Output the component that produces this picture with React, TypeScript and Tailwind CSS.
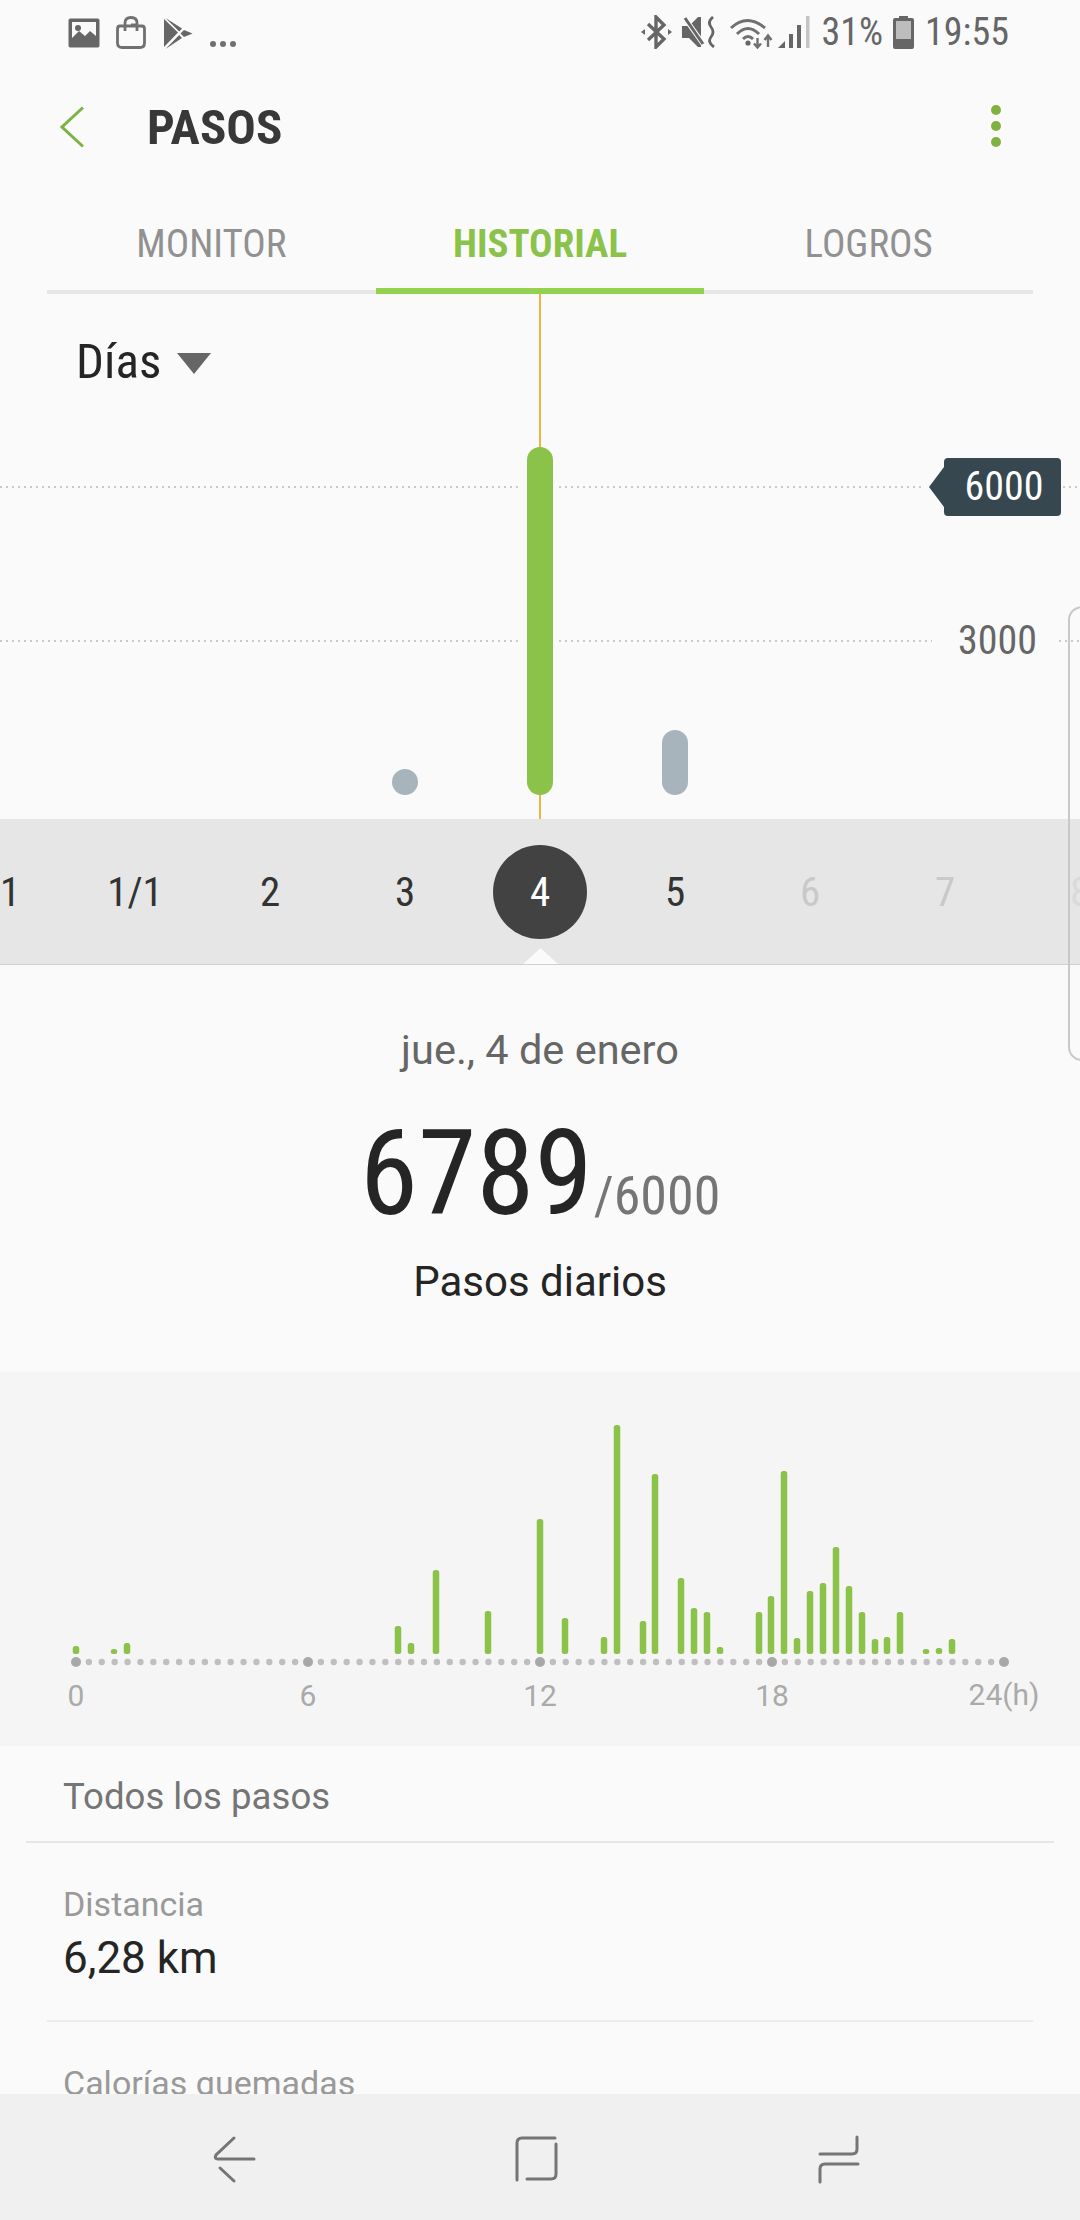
const BARS: [number, number][] = [
  [76, 8], [114, 5], [127, 11], [398, 28], [411, 11], [436, 84], [488, 43], [540, 135],
  [565, 36], [604, 17], [617, 229], [643, 33], [655, 180], [681, 76], [694, 46], [707, 42],
  [720, 7], [759, 42], [771, 58], [784, 183], [797, 16], [810, 63], [823, 71], [836, 107],
  [849, 68], [862, 42], [875, 15], [887, 17], [900, 42], [926, 5], [939, 6], [952, 15],
];
const DOTS = Array.from({ length: 73 }, (_, i) => i);
const DAYS = ["31", "1/1", "2", "3", "4", "5", "6", "7", "8"];
const FONT = "font-['Roboto',sans-serif]";

function StatusLeft() {
  return (
    <div className="flex items-end">
      <svg width="32" height="30" viewBox="0 0 32 30" className="mb-[1px]">
        <rect x="0.5" y="0.5" width="31" height="29" rx="2" fill="#666" />
        <path d="M4 4H28V18L22 13L17 18L11 13L4 20Z" fill="#fafafa" />
        <circle cx="10" cy="10" r="3" fill="#666" />
      </svg>
      <svg width="30" height="33" viewBox="0 0 30 33" className="ml-[16px]" fill="none" stroke="#707070" strokeWidth="2.8">
        <path d="M4 10H26Q28.5 10 28.5 13V27Q28.5 31.5 24 31.5H6Q1.5 31.5 1.5 27V13Q1.5 10 4 10Z" />
        <path d="M9 15V7Q9 1.5 15 1.5Q21 1.5 21 7V15M15 9H21" />
      </svg>
      <svg width="29" height="31" viewBox="0 0 29 31" className="ml-[18px]" fill="#666">
        <path d="M0 1L14 14.5L0 29Z" />
        <path d="M1.5 0L18 10.5L15.2 13.5Z" />
        <path d="M1.5 31L18 20L15.2 17Z" />
        <path d="M20 12L28.5 15.5L20 19L16.5 15.5Z" />
      </svg>
      <svg width="28" height="8" viewBox="0 0 28 8" className="ml-[16px] mb-[1px]" fill="#707070">
        <circle cx="4" cy="4" r="3" />
        <circle cx="14" cy="4" r="3" />
        <circle cx="24" cy="4" r="3" />
      </svg>
    </div>
  );
}

function StatusRight() {
  return (
    <div className={`flex items-center text-[38px] leading-[46px] text-[#666] ${FONT} [font-stretch:75%]`}>
      <svg width="31" height="34" viewBox="0 0 31 34" fill="none" stroke="#666" strokeWidth="3.4">
        <path d="M7 9L23 24L15 32V2L23 10L7 25" />
        <path d="M0 17L4 14V20Z" fill="#666" stroke="none" />
        <path d="M31 17L27 14V20Z" fill="#666" stroke="none" />
      </svg>
      <svg width="35" height="32" viewBox="0 0 35 32" className="ml-[10px]">
        <path d="M0 10H7L16 1H19V31H16L7 22H0Z" fill="#666" />
        <path d="M2 1L22 29" stroke="#fafafa" strokeWidth="5" />
        <path d="M3 2L21 28" stroke="#666" strokeWidth="3" />
        <path d="M31 1Q25 6 29 11Q33 16 29 21Q25 26 32 31" fill="none" stroke="#666" strokeWidth="2.8" />
      </svg>
      <svg width="43" height="33" viewBox="0 0 43 33" className="ml-[13px]" fill="none" stroke="#707070" strokeWidth="3">
        <path d="M1 12Q17 -3 35 12" />
        <path d="M7 18Q18 7 29 18" />
        <path d="M13 23Q18 18 23 23" />
        <circle cx="18" cy="27" r="2.6" fill="#666" stroke="none" />
        <path d="M27.5 22V31M24 27.5L27.5 31.5L31 27.5M38 31V20M34.5 24L38 19.5L41.5 24" strokeWidth="2.4" />
      </svg>
      <svg width="32" height="32" viewBox="0 0 32 32" className="ml-[5px]">
        <path d="M0 32L7 25V32Z" fill="#666" />
        <rect x="11" y="18" width="4" height="14" fill="#666" />
        <rect x="19" y="9" width="4" height="23" fill="#666" />
        <rect x="28" y="0" width="3.5" height="32" fill="#c4c4c4" />
      </svg>
      <span className="ml-[12px]">31%</span>
      <svg width="21" height="33" viewBox="0 0 21 33" className="ml-[10px]">
        <path d="M6 0H15V2H19Q21 2 21 4V31Q21 33 19 33H2Q0 33 0 31V4Q0 2 2 2H6Z" fill="#666" />
        <rect x="3" y="5" width="15" height="18" fill="#bdbdbd" />
      </svg>
      <span className="ml-[11px]">19:55</span>
    </div>
  );
}

function Chart() {
  return (
    <div className="relative h-[525px]">
      <svg width="1080" height="525" className="absolute inset-0">
        <line x1="540" y1="0" x2="540" y2="525" stroke="#ebb545" strokeWidth="2" />
        <g stroke="#c9c9c9" strokeWidth="2" strokeDasharray="2 4">
          <line x1="0" y1="193" x2="522" y2="193" />
          <line x1="559" y1="193" x2="925" y2="193" />
          <line x1="1063" y1="193" x2="1080" y2="193" />
          <line x1="0" y1="347" x2="522" y2="347" />
          <line x1="559" y1="347" x2="932" y2="347" />
          <line x1="1059" y1="347" x2="1080" y2="347" />
        </g>
        <rect x="527" y="153" width="26" height="348" rx="13" fill="#8bc34a" />
        <rect x="392" y="475" width="26" height="26" rx="13" fill="#a7b4bb" />
        <rect x="662" y="436" width="26" height="65" rx="13" fill="#a7b4bb" />
      </svg>
      <div className="relative flex h-[136px] items-center pl-[76px]">
        <span className={`text-[49px] leading-[56px] text-[#252525] ${FONT} [font-stretch:75%]`}>Días</span>
        <svg width="34" height="21" viewBox="0 0 34 21" className="ml-[16px] mt-[3px]">
          <path d="M0 0H34L17 21Z" fill="#666" />
        </svg>
      </div>
      <div className={`absolute left-[929px] top-[164px] flex items-center ${FONT}`}>
        <svg width="15" height="40" viewBox="0 0 15 40">
          <path d="M15 0V40L0 20Z" fill="#37474f" />
        </svg>
        <div className="flex h-[58px] w-[117px] items-center justify-center rounded-[4px] bg-[#37474f] pl-[3px] text-[40px] leading-[46px] text-white [font-stretch:75%]">
          6000
        </div>
      </div>
      <div className={`absolute left-[958px] top-[324px] text-[40px] leading-[46px] text-[#666] ${FONT} [font-stretch:75%]`}>3000</div>
    </div>
  );
}

function DateStrip() {
  return (
    <div className={`relative flex h-[146px] items-center justify-center overflow-hidden border-b border-[#cfcfcf] bg-[#e6e6e6] ${FONT} [font-stretch:75%]`}>
      {DAYS.map((d) => {
        const selected = d === "4";
        const faded = d === "6" || d === "7";
        return (
          <div key={d} className="flex w-[135px] shrink-0 justify-center">
            {selected ? (
              <div className="flex h-[94px] w-[94px] items-center justify-center rounded-full bg-[#424242] text-[41px] leading-[48px] text-white">{d}</div>
            ) : (
              <div className={`flex h-[94px] items-center text-[41px] leading-[48px] ${d === "8" ? "text-[#dadada]" : faded ? "text-[#c9c9c9]" : "text-[#333]"}`}>{d}</div>
            )}
          </div>
        );
      })}
      <svg width="37" height="17" viewBox="0 0 37 17" className="absolute bottom-[-1px] left-[522px]">
        <path d="M0 17L18.5 0L37 17Z" fill="#fafafa" />
      </svg>
    </div>
  );
}

function Summary() {
  return (
    <div className={`flex h-[407px] flex-col items-center ${FONT}`}>
      <div className="mt-[62px] text-[41.5px] leading-[46px] text-[#666]">jue., 4 de enero</div>
      <div className="mt-[42px] flex items-baseline">
        <span className="text-[118px] leading-[119px] text-[#252525] [font-stretch:75%]">6789</span>
        <span className="ml-[1px] text-[54px] leading-[60px] text-[#757575] [font-stretch:75%]">/6000</span>
      </div>
      <div className="mt-[24px] text-[42px] leading-[48px] text-[#252525]">Pasos diarios</div>
    </div>
  );
}

function Hourly() {
  return (
    <div className={`h-[374px] overflow-hidden bg-[#f5f5f5] ${FONT}`}>
      <svg width="1080" height="304" className="block">
        {BARS.map(([x, h]) => (
          <rect key={x} x={x - 3.25} y={282 - h} width="6.5" height={h} rx="2.5" fill="#8bc34a" />
        ))}
        {DOTS.map((i) => {
          const big = i % 18 === 0;
          return (
            <circle
              key={i}
              cx={76 + i * (928 / 72)}
              cy={290}
              r={big ? 5 : 3.2}
              fill={big ? "#a8a8a8" : "#bfbfbf"}
            />
          );
        })}
      </svg>
      <div className="-ml-[40px] flex h-[40px] w-[1160px] items-center text-[30px] leading-[36px] text-[#aaa]">
        {["0", "6", "12", "18", "24(h)"].map((l) => (
          <div key={l} className={`w-[232px] shrink-0 text-center ${l === "24(h)" ? "-mt-[2px]" : ""}`}>{l}</div>
        ))}
      </div>
    </div>
  );
}

function Details() {
  return (
    <div className={`min-h-0 flex-1 overflow-hidden ${FONT}`}>
      <div className="mx-[26px] h-[97px] border-b-2 border-[#e6e6e6] pl-[37px] pt-[29px] text-[36.6px] leading-[44px] text-[#757575]">
        Todos los pasos
      </div>
      <div className="mx-[47px] h-[179px] border-b-2 border-[#ececec] pl-[16px] pt-[41px]">
        <div className="text-[34px] leading-[40px] text-[#999]">Distancia</div>
        <div className="mt-[8px] text-[44px] leading-[52px] text-[#252525]">6,28 km</div>
      </div>
      <div className="pl-[63px] pt-[41px] text-[34px] leading-[40px] text-[#999]">Calorías quemadas</div>
    </div>
  );
}

function BottomNav() {
  return (
    <div className="relative flex h-[126px] shrink-0 items-center bg-[#f0f0f0]">
      <svg width="1080" height="126" viewBox="0 2094 1080 126" fill="none" stroke="#757575" strokeWidth="3" strokeLinecap="round">
        <path d="M234 2138L216 2155Q214 2159 218 2159H254" />
        <path d="M220 2168L234 2181" />
        <path d="M555 2138H522Q517 2138 517 2143V2180" />
        <path d="M556 2144V2174Q556 2179 551 2179H527" />
        <path d="M857 2137V2149Q857 2154 852 2154H820" />
        <path d="M858 2164H825Q820 2164 820 2169V2182" />
      </svg>
    </div>
  );
}

export default function App() {
  return (
    <div className="relative flex h-[2220px] w-[1080px] flex-col overflow-hidden bg-[#fafafa]">
      <div className="flex h-[64px] shrink-0 items-center justify-between pl-[68px] pr-[71px]">
        <StatusLeft />
        <StatusRight />
      </div>
      <div className={`relative flex h-[128px] shrink-0 items-center pl-[60px] ${FONT}`}>
        <svg width="24" height="42" viewBox="0 0 24 42" className="mb-[2px]" fill="none" stroke="#7cb342" strokeWidth="3">
          <path d="M23 1.5L2 21L23 40.5" />
        </svg>
        <span className="ml-[63px] text-[49px] font-bold leading-[58px] text-[#383838] [font-stretch:75%]">PASOS</span>
        <div className="ml-auto mb-[4px] mr-[79px] flex flex-col gap-[6px]">
          <div className="h-[10px] w-[10px] rounded-full bg-[#7fb241]" />
          <div className="h-[10px] w-[10px] rounded-full bg-[#7fb241]" />
          <div className="h-[10px] w-[10px] rounded-full bg-[#7fb241]" />
        </div>
      </div>
      <div className={`mx-[47px] flex h-[102px] shrink-0 ${FONT} text-[39px] leading-[46px] [font-stretch:75%]`}>
        <div className="flex flex-1 items-center justify-center border-b-4 border-[#e6e6e6] pt-[6px] text-[#919191]">MONITOR</div>
        <div className="flex flex-1 items-center justify-center border-b-[6px] border-[#93d14f] pt-[8px] font-bold text-[#8bc34a]">HISTORIAL</div>
        <div className="flex flex-1 items-center justify-center border-b-4 border-[#e6e6e6] pt-[6px] text-[#919191]">LOGROS</div>
      </div>
      <Chart />
      <DateStrip />
      <Summary />
      <Hourly />
      <Details />
      <BottomNav />
      <div className="absolute left-[1068px] top-[606px] h-[455px] w-[20px] rounded-l-[14px] border-2 border-[#c8c8c8]" />
    </div>
  );
}
